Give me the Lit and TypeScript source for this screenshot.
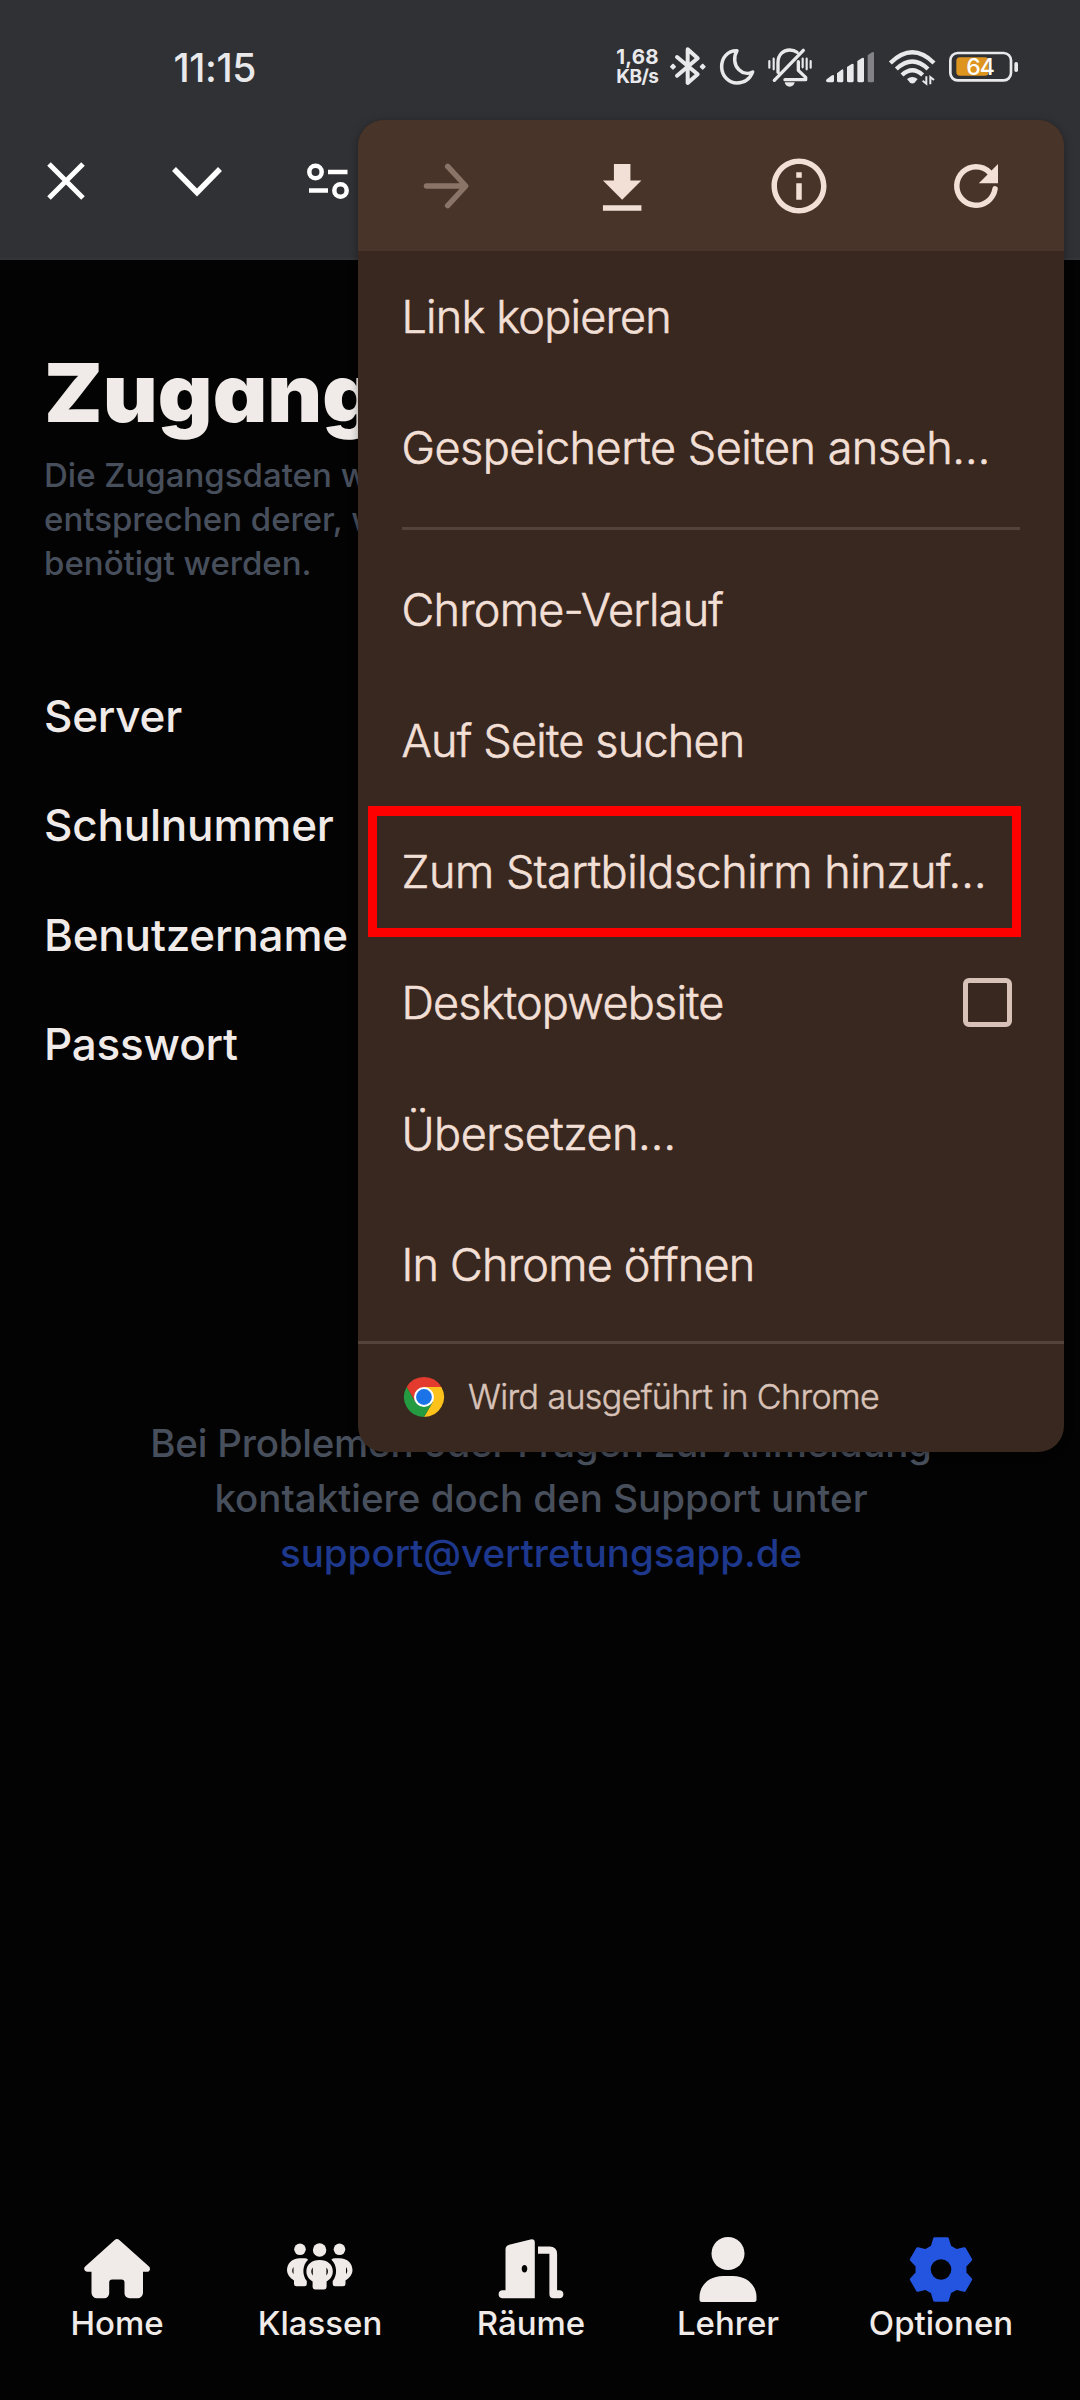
import { LitElement, html, svg, css } from "lit";
import { customElement } from "lit/decorators.js";

const ICON = {
  forward: svg`<path d="M4.9 12H19M12.6 4.9 19.2 12l-6.6 7.1" fill="none" stroke="currentColor" stroke-width="2" stroke-linecap="round" stroke-linejoin="round"/>`,
  download: svg`<path d="M18.700 10h-4V4h-6v6h-4l7 7 7-7zM4.700 19v2h14v-2z" fill="currentColor"/>`,
  info: svg`<path d="M11 7h2v2h-2zm0 4h2v6h-2zm1-9C6.48 2 2 6.48 2 12s4.48 10 10 10 10-4.48 10-10S17.52 2 12 2zm0 18c-4.41 0-8-3.59-8-8s3.59-8 8-8 8 3.59 8 8-3.59 8-8 8z" fill="currentColor"/>`,
  reload: svg`<path d="M17.65 6.35A7.96 7.96 0 0 0 12 4a8 8 0 1 0 7.9 9.3 1 1 0 0 0-1.95-.5A6 6 0 1 1 12 6c1.66 0 3.14.69 4.22 1.78L13 11h7V4z" fill="currentColor"/>`,
};

const gearPoints = Array.from({ length: 6 }, (_, k) => {
  const base = -90 + k * 60;
  return [[-21, 24], [-11.5, 31], [11.5, 31], [21, 24]]
    .map(([a, r]) => {
      const t = ((base + a) * Math.PI) / 180;
      return `${(31 + r * Math.cos(t)).toFixed(2)},${(32.5 + r * Math.sin(t)).toFixed(2)}`;
    })
    .join(" ");
}).join(" ");

const NAV = [
  {
    label: "Home",
    w: 66,
    h: 60,
    art: svg`<path d="M30.4 1.2a4 4 0 0 1 5.2 0L65 27.6c2 2 .8 5.2-2 5.2h-4V54a5.500 5.500 0 0 1-5.500 5.200H45.500a5 5 0 0 1-5-5V43.500a3 3 0 0 0-3-3h-9.300a3 3 0 0 0-3 3V54a5 5 0 0 1-5 5.200H13A5.500 5.500 0 0 1 7.500 54V32.800h-4c-3 0-4.500-3.200-2.300-5.200z"/>`,
  },
  {
    label: "Klassen",
    w: 66,
    h: 53,
    art: svg`<circle cx="13" cy="6.300" r="5.800"/><circle cx="52.500" cy="6.300" r="5.800"/><circle cx="32.600" cy="7" r="6.700"/>
      <path fill-rule="evenodd" d="M13 15.300h4.500q2.500 0 3.600 1.400c-6 5.500-6 15.500-1.300 21.300v3q0 2.300-2.300 2.300H9.500Q7 43.300 7 41v-3.500C2.500 34.500 0 31 0 27.500c0-7 5-12.200 13-12.200zM6.500 24c-1.700 2.300-1.700 5 0 7.300z"/>
      <path fill-rule="evenodd" d="M52.500 15.300H48q-2.500 0-3.600 1.400c6 5.500 6 15.500 1.300 21.300v3q0 2.300 2.300 2.300h8q2.500 0 2.500-2.300v-3.500c4.500-3 7-6.500 7-10 0-7-5-12.200-13-12.200zM59 24c1.700 2.300 1.700 5 0 7.300z"/>
      <path fill-rule="evenodd" d="M32.600 17c8 0 13.200 4.800 13.200 11.200 0 4.500-2.300 8-6.200 10.200V44q0 2.400-2.400 2.400h-9.200q-2.400 0-2.400-2.400v-5.600c-3.900-2.200-6.200-5.700-6.200-10.200C19.400 21.800 24.600 17 32.600 17zM25.800 24.500c-2 2.300-2 5.500 0 8zM39.400 24.500v8c2-2.500 2-5.700 0-8z"/>`,
  },
  {
    label: "Räume",
    w: 66,
    h: 60,
    art: svg`<path fill-rule="evenodd" d="M7.500 51.300V10.500q0-3.800 3.600-4.800L32.500.4Q36.800-.4 36.800 3.600V59.200H4a4 4 0 0 1 0-7.900zM26.500 25.900c-1.600 0-2.800 1.700-2.800 3.800s1.200 3.800 2.800 3.800 2.800-1.700 2.800-3.800-1.200-3.800-2.800-3.800z"/><path d="M40 7.400h11.500q7.600 0 7.600 7.600v36.300H62a4 4 0 0 1 0 7.900h-6.500q-4.100 0-4.100-4V14.800H40z"/>`,
  },
  {
    label: "Lehrer",
    w: 58,
    h: 65,
    art: svg`<circle cx="29" cy="16.500" r="16.500"/><path d="M24 39h10c14 0 23.500 9.500 23.500 21v2.500q0 2.500-2.500 2.500H3Q.5 65 .5 62.500V60C.5 48.500 10 39 24 39z"/>`,
  },
  {
    label: "Optionen",
    w: 62,
    h: 65,
    active: true,
    art: svg`<polygon points=${gearPoints} stroke="currentColor" stroke-width="3.500" stroke-linejoin="round"/><circle cx="31" cy="32.500" r="10.300" fill="#030303"/>`,
  },
];

@customElement("app-root")
export class AppRoot extends LitElement {
  static styles = css`
    :host {
      display: block;
      font-family: Inter, "Liberation Sans", sans-serif;
      color: #f0ebe8;
    }
    * {
      box-sizing: border-box;
    }
    svg {
      display: block;
      flex: none;
      overflow: visible;
    }
    .screen {
      position: relative;
      display: flex;
      flex-direction: column;
      width: 1080px;
      height: 2400px;
      overflow: hidden;
      background: #030303;
    }
    .top {
      height: 260px;
      background: #303135;
      border-bottom: 2px solid #343539;
      flex: none;
    }
    .status {
      height: 134px;
      padding: 0 62px 0 173.500px;
      display: flex;
      align-items: center;
      color: #e9e9eb;
    }
    .time {
      font-size: 39px;
      font-weight: 500;
      letter-spacing: -0.4px;
    }
    .tray {
      margin-left: auto;
      display: flex;
      align-items: center;
      gap: 14.300px;
    }
    .speed {
      width: 43px;
      margin-right: -4px;
      white-space: nowrap;
      font-weight: 700;
      line-height: 20.500px;
      font-size: 20.500px;
    }
    .speed .unit {
      display: block;
      font-size: 19px;
      letter-spacing: -0.5px;
    }
    .speed .rate {
      display: block;
      letter-spacing: 0.2px;
    }
    .tools {
      height: 94px;
      padding-left: 47px;
      display: flex;
      align-items: center;
    }
    .tools svg + svg {
      margin-left: 87px;
    }
    .tools svg:last-child {
      margin-left: 85px;
    }
    .main {
      flex: 1;
      display: flex;
      flex-direction: column;
      padding: 83px 44px 0;
    }
    h1 {
      margin: 0;
      align-self: flex-start;
      font-size: 80.500px;
      font-weight: 900;
      line-height: 100px;
      font-feature-settings: "cv11";
      transform: scaleX(1.052);
      transform-origin: left;
      white-space: nowrap;
    }
    .lead {
      margin: 10px 0 76px;
      font-size: 33px;
      line-height: 44px;
      font-weight: 500;
      color: #484f5c;
    }
    .field {
      height: 109.500px;
      display: flex;
      align-items: center;
      font-size: 44px;
      font-weight: 500;
      letter-spacing: -0.200px;
    }
    .support {
      margin: 317px 0 0;
      padding-left: 2px;
      text-align: center;
      font-size: 38.500px;
      line-height: 55px;
      font-weight: 500;
      color: #484f5c;
    }
    .support .first {
      letter-spacing: -0.220px;
    }
    .support a {
      color: #1d388c;
    }
    nav {
      flex: none;
      height: 165px;
      padding-left: 16px;
      display: grid;
      grid-template-columns: 202px 204px 218px 176px 250px;
    }
    .tab {
      display: flex;
      flex-direction: column;
      align-items: center;
      font-size: 33px;
      font-weight: 500;
      line-height: 40px;
    }
    .pic {
      height: 68px;
      display: flex;
      align-items: center;
    }
    .pic svg {
      fill: currentColor;
    }
    .active .pic {
      color: #2455e0;
    }
    .menu {
      position: absolute;
      left: 358px;
      top: 120px;
      width: 706px;
      height: 1332px;
      border-radius: 26px;
      overflow: hidden;
      background: #38281f;
      color: #f2dfd5;
      display: flex;
      flex-direction: column;
    }
    .shade {
      position: absolute;
      left: 358px;
      top: 120px;
      width: 706px;
      height: 1332px;
      border-radius: 26px;
      box-shadow: 0 2px 9px rgba(0, 0, 0, 0.350);
    }
    .actions {
      height: 131px;
      background: #483428;
      display: grid;
      grid-template-columns: repeat(4, 1fr);
      align-items: center;
      justify-items: center;
      flex: none;
    }
    .off {
      color: #8a7367;
    }
    .item {
      height: 131px;
      padding: 0 52px 0 43.500px;
      display: flex;
      align-items: center;
      justify-content: space-between;
      font-size: 45px;
      font-weight: 300;
      letter-spacing: -0.800px;
      -webkit-text-stroke: 0.600px currentColor;
      white-space: nowrap;
    }
    .cut {
      letter-spacing: -0.500px;
    }
    .rule {
      height: 3px;
      margin: 14px 44px;
      background: #53433a;
    }
    .box {
      width: 49px;
      height: 49px;
      border: 5.500px solid #d8c2b8;
      border-radius: 6px;
    }
    .foot {
      margin-top: 11px;
      border-top: 3px solid #53433a;
      flex: 1;
      display: flex;
      align-items: center;
      gap: 24px;
      padding: 0 46px 3px;
      font-size: 34px;
      font-weight: 300;
      letter-spacing: -0.620px;
      -webkit-text-stroke: 0.450px currentColor;
      color: #d8c2b8;
    }
    .mark {
      position: absolute;
      left: 368px;
      top: 806px;
      width: 653px;
      height: 131px;
      border: 9px solid #fe0000;
      border-top-width: 10px;
    }
  `;

  private menuIcon(art: unknown, cls = "") {
    return html`<svg class=${cls} width="66" height="66" viewBox="0 0 24 24">${art}</svg>`;
  }

  private statusTray() {
    return html`
      <div class="tray">
        <div class="speed"><span class="rate">1,68</span><span class="unit">KB/s</span></div>
        <svg width="35.700" height="40" viewBox="234 82 107 120" fill="none" stroke="currentColor" stroke-width="12" stroke-linejoin="round" stroke-linecap="round">
          <path d="M255 112l62 52-30 26V89l30 27-62 52" />
          <path d="M243 134l7 7-7 7-7-7zM332 134l7 7-7 7-7-7z" fill="currentColor" stroke-width="4" />
        </svg>
        <svg width="34.300" height="40" viewBox="387 82 103 120" fill="none" stroke="currentColor" stroke-width="10.500" stroke-linejoin="round">
          <path d="M438 93C410 92 391 115 392 143c1 27 22 47 46 47 21 0 39-12 47-33-12 6-29 5-41-7-15-14-17-38-6-57z" />
        </svg>
        <svg width="44" height="40" viewBox="537 82 132 120" fill="none" stroke="currentColor" stroke-width="10" stroke-linecap="round" stroke-linejoin="round">
          <path d="M556 182l87-90M567 158V128c0-22 15-37 35-37 9 0 16 2 22 7M628 126v26l22 21v7h-62" />
          <path d="M541 124v20M554 117v32M641 117v26M653 117v32M665 124v20" stroke-width="6.500" />
          <path d="M587 188h30q-3 13-15 13t-15-13z" fill="currentColor" stroke="none" />
        </svg>
        <svg width="48" height="40" viewBox="711 82 144 120" fill="currentColor">
          <path d="M735 168v15q0 5-5 5h-14q-8-2-3-9l14-11q7-4 8 0zM744 161l14-11q5-3 5 3v30q0 5-5 5h-9q-5 0-5-5zM774 142l14-9q6-3 6 3v47q0 5-5 5h-10q-5 0-5-5zM805 124l14-9q6-3 6 3v65q0 5-5 5h-10q-5 0-5-5z" />
          <path d="M836 107l13-9q6-3 6 3v82q0 5-5 5h-9q-5 0-5-5z" opacity=".45" />
        </svg>
        <svg width="46" height="40" viewBox="893 82 138 120" fill="none" stroke="currentColor" stroke-width="13">
          <path d="M897 130q66-64 131 0M915 148q48-45 95 0M932 166q31-29 62 0" />
          <path d="M947 178q16-12 32 0l-8 10q-8 7-16 0z" fill="currentColor" stroke="none" />
          <path d="M1005 170v22l-11-9M1017 194v-22l11 9" stroke-width="6" />
        </svg>
        <svg width="69" height="40" viewBox="1076 82 207 120">
          <rect x="1080" y="100" width="182" height="82" rx="22" fill="none" stroke="currentColor" stroke-width="8" />
          <rect x="1098" y="113" width="97" height="55" rx="11" fill="#dd951f" />
          <rect x="1272" y="127" width="11" height="30" rx="5" fill="currentColor" />
          <text x="1169" y="166" text-anchor="middle" font-size="69" font-weight="500" letter-spacing="-3" fill="#fff">64</text>
        </svg>
      </div>
    `;
  }

  render() {
    return html`
      <div class="screen">
        <header class="top">
          <div class="status">
            <span class="time">11:15</span>
            ${this.statusTray()}
          </div>
          <div class="tools">
            <svg width="38" height="38" viewBox="0 0 38 38" stroke="#fff" stroke-width="5"><path d="M2 2l34 34M36 2L2 36" /></svg>
            <svg width="50" height="38" viewBox="0 0 50 38" fill="none" stroke="#fff" stroke-width="5.500"><path d="M2 7l23 23.500L48 7" /></svg>
            <svg width="42" height="38" viewBox="0 0 42 38" fill="none" stroke="#fff" stroke-width="4.500"><circle cx="8.500" cy="10" r="6.200" /><path d="M21 10h19.500M2 28.500h19" /><circle cx="33.500" cy="28.500" r="6.200" /></svg>
          </div>
        </header>

        <main class="main">
          <h1>Zugang</h1>
          <p class="lead">Die Zugangsdaten w<br />entsprechen derer, w<br />benötigt werden.</p>
          ${["Server", "Schulnummer", "Benutzername", "Passwort"].map((l) => html`<label class="field">${l}</label>`)}
          <p class="support">
            <span class="first">Bei Problemen oder Fragen zur Anmeldung</span><br />kontaktiere doch den Support unter<br /><a>support@vertretungsapp.de</a>
          </p>
        </main>

        <nav>
          ${NAV.map(
            (n) => html`<div class="tab ${n.active ? "active" : ""}">
              <div class="pic"><svg width=${n.w} height=${n.h} viewBox="0 0 ${n.w} ${n.h}">${n.art}</svg></div>
              <span>${n.label}</span>
            </div>`
          )}
        </nav>

        <div class="shade"></div>
        <div class="menu">
          <div class="actions">
            ${this.menuIcon(ICON.forward, "off")} ${this.menuIcon(ICON.download)} ${this.menuIcon(ICON.info)} ${this.menuIcon(ICON.reload)}
          </div>
          <div class="item">Link kopieren</div>
          <div class="item cut">Gespeicherte Seiten anseh…</div>
          <div class="rule"></div>
          <div class="item">Chrome-Verlauf</div>
          <div class="item">Auf Seite suchen</div>
          <div class="item cut">Zum Startbildschirm hinzuf…</div>
          <div class="item">Desktopwebsite<span class="box"></span></div>
          <div class="item cut">Übersetzen…</div>
          <div class="item">In Chrome öffnen</div>
          <div class="foot">
            <svg width="40" height="40" viewBox="0 0 48 48">
              <path fill="#e33b2e" d="M3.200 12a24 24 0 0 1 41.600 0H24L13.600 30z" />
              <path fill="#fcc21b" d="M44.800 12A24 24 0 0 1 24 48l10.400-18L24 12z" />
              <path fill="#249a41" d="M3.200 12A24 24 0 0 0 24 48l10.400-18H13.600z" />
              <circle cx="24" cy="24" r="12" fill="#fff" />
              <circle cx="24" cy="24" r="9.500" fill="#1b73e8" />
            </svg>
            Wird ausgeführt in Chrome
          </div>
        </div>
        <div class="mark"></div>
      </div>
    `;
  }
}
